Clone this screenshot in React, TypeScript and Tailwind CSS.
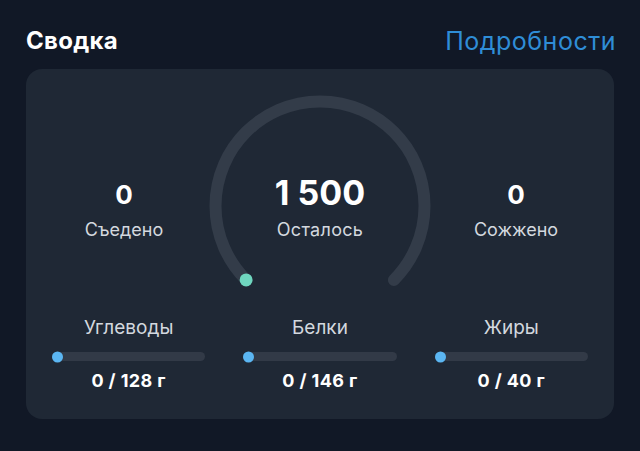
const MACROS = [
  { label: "Углеводы", value: "0 / 128 г" },
  { label: "Белки", value: "0 / 146 г" },
  { label: "Жиры", value: "0 / 40 г" },
];

function Gauge() {
  // 270° arc, gap at the bottom
  const cx = 112;
  const cy = 112;
  const r = 104.5;
  const d = r * Math.SQRT1_2;
  const path = `M ${cx - d} ${cy + d} A ${r} ${r} 0 1 1 ${cx + d} ${cy + d}`;
  return (
    <svg width="224" height="196" viewBox="0 0 224 196" className="block">
      <path d={path} fill="none" stroke="#333c49" strokeWidth="12" strokeLinecap="round" />
      <circle cx={cx - d} cy={cy + d} r="6.5" fill="#6fd6bf" />
    </svg>
  );
}

function Stat({ value, label }: { value: string; label: string }) {
  return (
    <div className="flex flex-col items-center pt-[85px]">
      <div className="text-[26px] leading-[32px] font-bold text-white">{value}</div>
      <div className="mt-[7px] text-[18px] leading-[24px] text-[#d3d8df]">{label}</div>
    </div>
  );
}

export default function App() {
  return (
    <div
      className="min-h-[451px] w-[640px] bg-[#111826] px-[26px] pb-[33px]"
      style={{ fontFamily: "Inter, 'Noto Sans', sans-serif" }}
    >
      <div className="flex h-[69px] items-start justify-between pt-[26px]">
        <h2 className="text-[24px] leading-[30px] font-bold tracking-[0.3px] text-white">Сводка</h2>
        <a className="mr-[-2px] text-[25px] leading-[30px] tracking-[0.5px] text-[#2f8dd6]">Подробности</a>
      </div>

      <div className="rounded-[16px] bg-[#1f2835] pt-[25px] pb-[26px]">
        <div className="grid grid-cols-[1fr_224px_1fr] px-[14px]">
          <Stat value="0" label="Съедено" />
          <div className="relative">
            <Gauge />
            <div className="absolute inset-x-0 top-[83px] flex flex-col items-center">
              <div className="text-[34px] leading-[32px] font-bold text-white">1 500</div>
              <div className="mt-[9px] text-[18px] leading-[24px] tracking-[0.3px] text-[#d3d8df]">Осталось</div>
            </div>
          </div>
          <Stat value="0" label="Сожжено" />
        </div>

        <div className="mt-[26px] grid grid-cols-3 gap-[38px] px-[26px]">
          {MACROS.map((m) => (
            <div key={m.label} className="flex flex-col items-center">
              <div className="text-[19px] leading-[24px] text-[#d3d8df]">{m.label}</div>
              <div className="relative mt-[12px] h-[9px] w-full rounded-full bg-[#323a47]">
                <span className="absolute top-1/2 left-0 h-[11px] w-[11px] -translate-y-1/2 rounded-full bg-[#5bb6f2]" />
              </div>
              <div className="mt-[8px] text-[18px] leading-[24px] font-bold tracking-[0.4px] text-white">{m.value}</div>
            </div>
          ))}
        </div>
      </div>
    </div>
  );
}
